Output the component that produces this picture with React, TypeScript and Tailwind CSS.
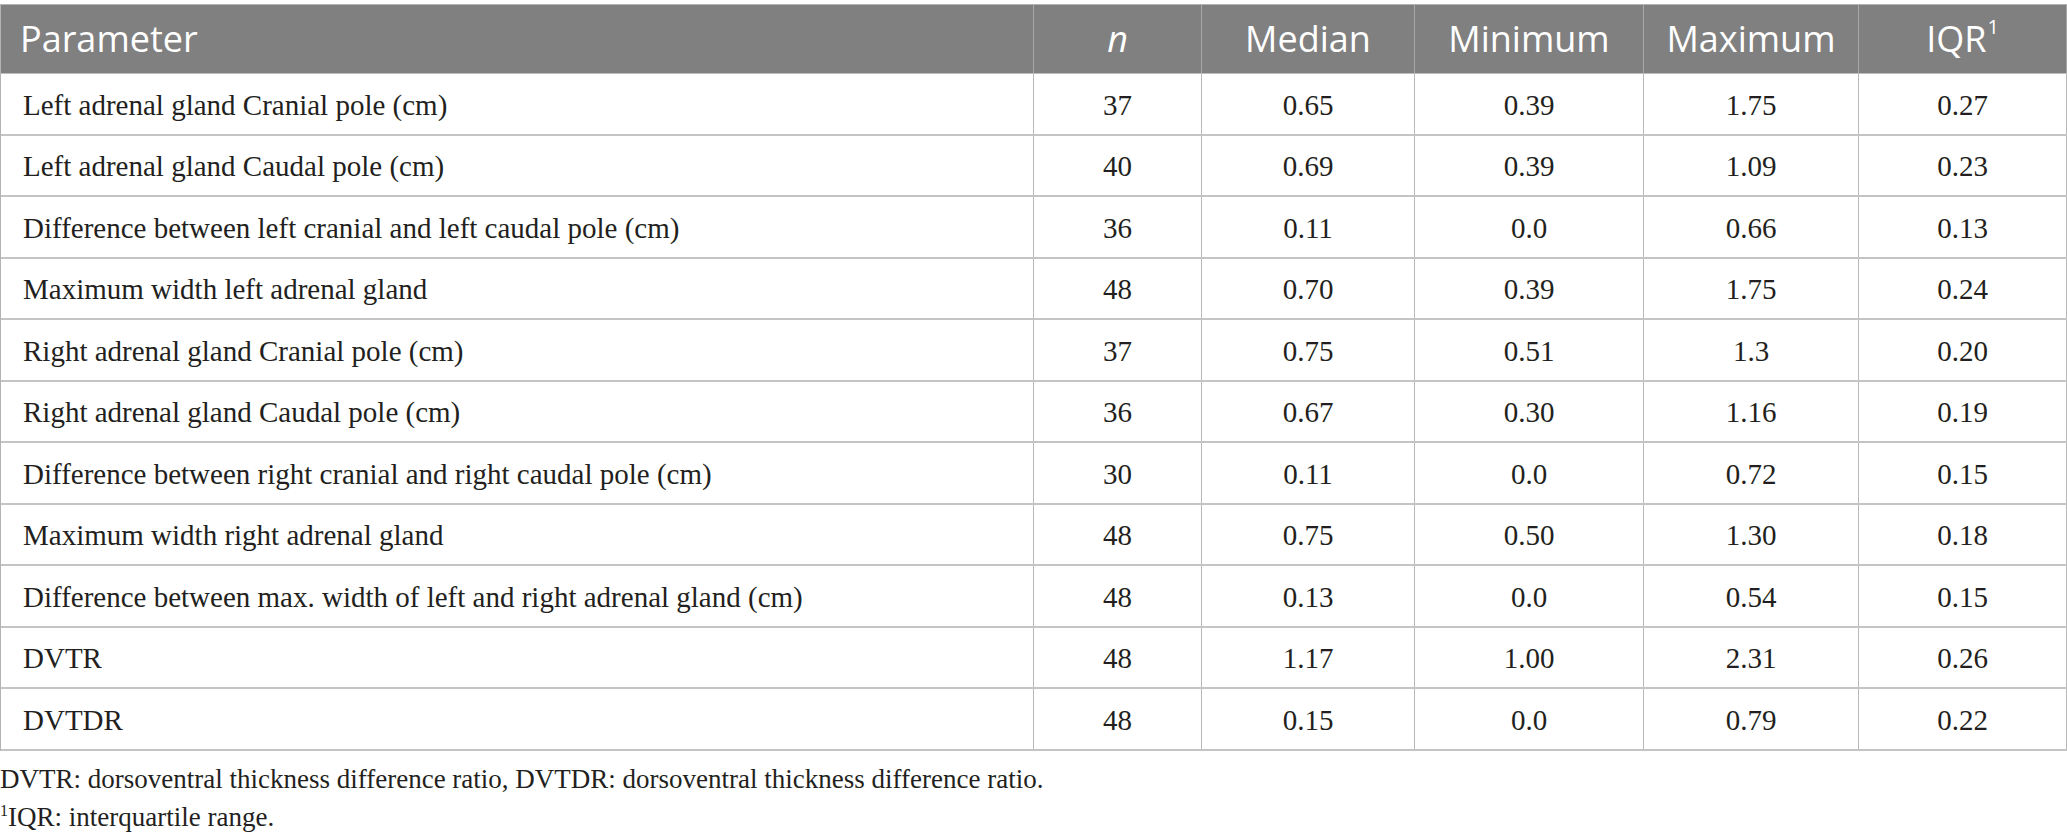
const cols = "grid grid-cols-[1033px_168px_213px_229px_215px_208px]";

const rows: [string, string, string, string, string, string][] = [
  ["Left adrenal gland Cranial pole (cm)", "37", "0.65", "0.39", "1.75", "0.27"],
  ["Left adrenal gland Caudal pole (cm)", "40", "0.69", "0.39", "1.09", "0.23"],
  ["Difference between left cranial and left caudal pole (cm)", "36", "0.11", "0.0", "0.66", "0.13"],
  ["Maximum width left adrenal gland", "48", "0.70", "0.39", "1.75", "0.24"],
  ["Right adrenal gland Cranial pole (cm)", "37", "0.75", "0.51", "1.3", "0.20"],
  ["Right adrenal gland Caudal pole (cm)", "36", "0.67", "0.30", "1.16", "0.19"],
  ["Difference between right cranial and right caudal pole (cm)", "30", "0.11", "0.0", "0.72", "0.15"],
  ["Maximum width right adrenal gland", "48", "0.75", "0.50", "1.30", "0.18"],
  ["Difference between max. width of left and right adrenal gland (cm)", "48", "0.13", "0.0", "0.54", "0.15"],
  ["DVTR", "48", "1.17", "1.00", "2.31", "0.26"],
  ["DVTDR", "48", "0.15", "0.0", "0.79", "0.22"],
];

const serif = "font-['Liberation_Serif',serif]";

export default function App() {
  return (
    <div className="w-[2067px] h-[838px] bg-white overflow-hidden pt-[4px]">
      <div className="w-[2067px] border-t border-l border-[#b4b4b4]">
        {/* header */}
        <div className={`${cols} h-[69px] bg-[#808080] text-white text-[36px] font-['Open_Sans',sans-serif] border-b border-[#bdbdbd]`}>
          <div className="flex items-center pl-[19px] border-r border-[#a8a8a8]">Parameter</div>
          <div className="flex items-center justify-center italic border-r border-[#a8a8a8]">n</div>
          <div className="flex items-center justify-center border-r border-[#a8a8a8]">Median</div>
          <div className="flex items-center justify-center border-r border-[#a8a8a8]">Minimum</div>
          <div className="flex items-center justify-center border-r border-[#a8a8a8]">Maximum</div>
          <div className="flex items-center justify-center border-r border-[#a8a8a8]">
            IQR<sup className="text-[20px] -top-[12px] ml-[1px]">1</sup>
          </div>
        </div>
        {/* body */}
        {rows.map((r, i) => (
          <div
            key={i}
            className={`${cols} h-[61.5px] text-[29px] text-[#231f20] ${serif} border-b-2 border-[#c4c4c4]`}
          >
            <div className="flex items-center pl-[22px] pt-[3px] border-r border-[#b8b8b8]">{r[0]}</div>
            {r.slice(1).map((v, j) => (
              <div key={j} className="flex items-center justify-center pt-[3px] border-r border-[#b8b8b8]">
                {v}
              </div>
            ))}
          </div>
        ))}
      </div>
      <div className={`mt-[9px] text-[27px] leading-[38px] text-[#231f20] ${serif}`}>
        <p>DVTR: dorsoventral thickness difference ratio, DVTDR: dorsoventral thickness difference ratio.</p>
        <p>
          <sup className="text-[16px] -top-[10px]">1</sup>IQR: interquartile range.
        </p>
      </div>
    </div>
  );
}
